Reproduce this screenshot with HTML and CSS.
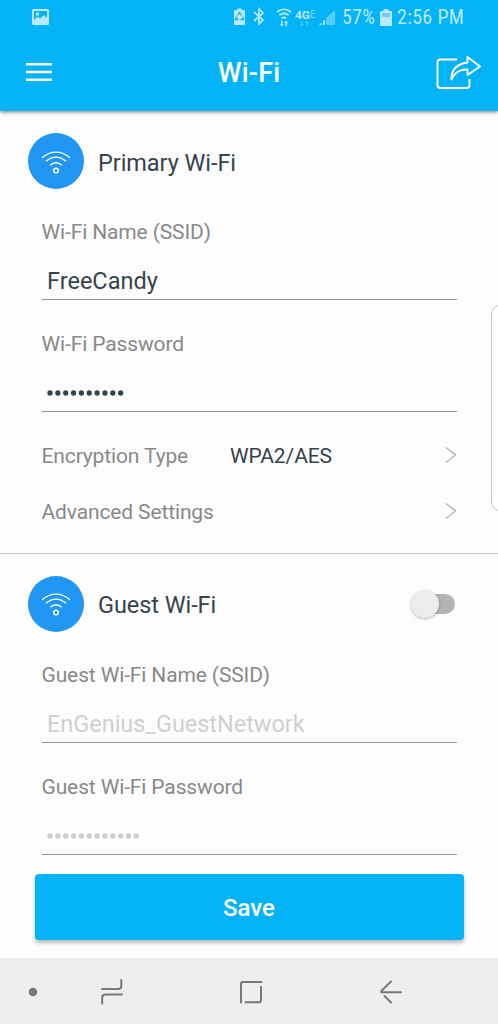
FILE: index.html
```html
<!DOCTYPE html>
<html lang="en">
<head>
<meta charset="utf-8">
<title>Wi-Fi</title>
<link rel="stylesheet" href="styles.css">
</head>
<body>
<header class="top">
  <div class="status">
    <svg class="status-photo" width="17" height="16" viewBox="0 0 17 16"><path fill-rule="evenodd" d="M1.500 0h14Q17 0 17 1.500v13Q17 16 15.500 16h-14Q0 16 0 14.500v-13Q0 0 1.500 0zM2 2v9l3.500-3.500L8 9.500 12 6l3 3V2zM4 3.500h3v3H4z"/></svg>
    <svg class="status-icons" width="102" height="20" viewBox="0 0 102 20">
      <path d="M3.500 1.500h4V3H10q1 0 1 1v13q0 1-1 1H1q-1 0-1-1V4q0-1 1-1h2.500z"/>
      <path class="recycle" d="M3.500 8.500l2-3 2 3M8.500 9.500l1 3H6.500M4.500 12.500h-3l1.200-3"/>
      <path class="line" d="M20 5l9 8-4 4V2l4 4-9 8"/>
      <path class="line" d="M43 5q7-5.500 14 0M45.300 8.300q4.700-3.800 9.400 0M47.600 11.300q2.400-2 4.800 0"/>
      <path d="M47 13.500h1.500V17H50l-2.200 2.500L45.500 17H47zM51.500 19.500V16H50l2.200-2.500 2.300 2.500H53v3.500z"/>
      <text class="network" x="61" y="11.500" textLength="15" lengthAdjust="spacingAndGlyphs">4G</text>
      <text class="lte" x="76" y="11" textLength="5.500" lengthAdjust="spacingAndGlyphs">E</text>
      <path class="faint" d="M67.500 14h1v3H70l-2 2-2-2h1.500zM72.500 19v-3H71l2-2 2 2h-1.500v3zM101 3v15H92v-7z"/>
      <path d="M91 12.500V18h-2v-3.800zM87.500 15.500V18h-2.500z"/>
    </svg>
    <span class="percent">57%</span>
    <svg class="battery" width="12" height="17" viewBox="0 0 12 17"><path d="M3.500 0h5v2H11q1 0 1 1v13q0 1-1 1H1q-1 0-1-1V3q0-1 1-1h2.500z"/><path class="empty" d="M2 4h8v4H2z"/></svg>
    <span class="clock">2:56 PM</span>
  </div>
  <div class="appbar">
    <svg class="menu" width="26" height="18" viewBox="0 0 26 18"><path d="M0 1.300h26M0 9h26M0 16.700h26"/></svg>
    <h1 class="title">Wi-Fi</h1>
    <svg class="share" width="46" height="34" viewBox="0 0 46 34"><path d="M22 3.500H5.500Q2.500 3.500 2.500 6.500V29Q2.500 32 5.500 32H31.500Q34.500 32 34.500 29V23"/><path d="M16.500 23.500Q16 9 32.500 6.500V1L45 10.500 32.500 19V13.500Q21 13 16.500 23.500z"/></svg>
  </div>
</header>
<main class="content">
  <section class="group">
    <div class="heading">
      <span class="badge"><svg width="30" height="26" viewBox="0 0 30 26"><path d="M1 6.700Q15-4.500 29 6.700M5 10.300Q15 2 25 10.300M9.300 14.300Q15 9 20.700 14.300"/><circle cx="15" cy="19.500" r="2.300"/></svg></span>
      <h2 class="primary-title">Primary Wi-Fi</h2>
    </div>
    <div class="field"><label class="label">Wi-Fi Name (SSID)</label><div class="value"><span class="ssid">FreeCandy</span></div></div>
    <div class="field"><label class="label">Wi-Fi Password</label><div class="value"><svg class="dots" width="92" height="8"><path d="M3 4h73"/></svg></div></div>
    <div class="row"><span class="label encryption">Encryption Type</span><span class="setting">WPA2/AES</span><svg class="chevron" width="12" height="18" viewBox="0 0 12 18"><path d="M1 1.500l9.500 7.500L1 16.500"/></svg></div>
    <div class="row"><span class="label">Advanced Settings</span><svg class="chevron" width="12" height="18" viewBox="0 0 12 18"><path d="M1 1.500l9.500 7.500L1 16.500"/></svg></div>
  </section>
  <section class="group guest">
    <div class="heading">
      <span class="badge"><svg width="30" height="26" viewBox="0 0 30 26"><path d="M1 6.700Q15-4.500 29 6.700M5 10.300Q15 2 25 10.300M9.300 14.300Q15 9 20.700 14.300"/><circle cx="15" cy="19.500" r="2.300"/></svg></span>
      <h2 class="guest-title">Guest Wi-Fi</h2>
      <span class="toggle"><span class="knob"></span></span>
    </div>
    <div class="field"><label class="label">Guest Wi-Fi Name (SSID)</label><div class="value"><span class="guest-ssid">EnGenius_GuestNetwork</span></div></div>
    <div class="field"><label class="label">Guest Wi-Fi Password</label><div class="value"><svg class="dots muted" width="96" height="8"><path d="M3 4h88"/></svg></div></div>
  </section>
  <button class="save">Save</button>
  <div class="edge-panel"></div>
</main>
<nav class="navbar">
  <svg class="nav-dot" width="10" height="10"><circle cx="5" cy="5" r="4.300"/></svg>
  <svg class="recents" width="22" height="26" viewBox="0 0 22 26"><path d="M20.300 1v6Q20.300 10 17.300 10H1M21 15.500H4.500Q1.200 15.500 1.200 18.500V24.500"/></svg>
  <svg class="home" width="24" height="24" viewBox="0 0 24 24"><path d="M2 22.500V4Q2 2 4 2H22.500M22 7V20Q22 22.200 20 22.200H6.500"/></svg>
  <svg class="back" width="22" height="24" viewBox="0 0 22 24"><path d="M11 1.500L1.700 10.500Q.700 12.300 2 12.300H21M4.500 16L11 22.500"/></svg>
</nav>
</body>
</html>
```
FILE: styles.css
```css
* { box-sizing: border-box; }
body { margin: 0; width: 498px; height: 1024px; overflow: hidden; display: flex; flex-direction: column; background: #fdfdfd; color: #37434b; font-family: Roboto, sans-serif; }
svg { display: block; flex: none; }
h1, h2 { margin: 0; }
.top { position: relative; z-index: 1; height: 111px; background: #03b3f8; box-shadow: 0 1px 4px #0008; }
.status { height: 34px; display: flex; align-items: center; padding-left: 32px; fill: #b9eaff; color: #b9eaff; font-size: 20px; font-stretch: 75%; white-space: nowrap; }
.status-icons { margin: 0 0 0 185px; }
.recycle { fill: none; stroke: #16a9de; stroke-width: 1.3; }
.line { fill: none; stroke: #b9eaff; stroke-width: 1.7; }
.network { font: bold 11px Roboto, sans-serif; }
.lte { font: 10px Roboto, sans-serif; opacity: .65; }
.faint { opacity: .45; }
.percent { width: 34px; margin-left: 6px; letter-spacing: .2px; }
.battery { margin-left: 4px; }
.empty { fill: #70cdf4; }
.clock { margin-left: 5px; letter-spacing: .3px; }
.appbar { height: 77px; display: grid; grid-template-columns: 100px 1fr 100px; align-items: center; padding: 0 17px 2px 26px; }
.menu { fill: none; stroke: #fff; stroke-width: 2.6; }
.title { color: #fff; font-size: 27px; line-height: 30px; font-weight: 500; text-align: center; padding: 2px 9px 0 0; letter-spacing: .2px; }
.share { justify-self: end; margin-top: 2px; fill: none; stroke: #fff; stroke-width: 1.9; stroke-linejoin: round; }
.content { position: relative; height: 847px; }
.group { height: 442.500px; padding: 22px 41.500px 0; border-bottom: 1px solid #c6c6c6; }
.heading { height: 56px; margin-left: -13.500px; display: flex; align-items: center; gap: 14px; }
.heading h2 { font-size: 23.500px; font-weight: 400; line-height: 30px; padding-top: 3px; letter-spacing: -.06px; }
.badge { width: 56px; height: 56px; border-radius: 50%; background: #2196f3; display: grid; place-items: center; flex: none; }
.badge svg { fill: none; stroke: #fff; stroke-width: 1.4; margin-top: 5px; }
.field { height: 112px; padding-top: 28px; }
.label { display: block; color: #898989; font-size: 21px; line-height: 30px; letter-spacing: -.13px; }
.value { height: 53px; border-bottom: 1px solid #949494; padding: 18px 5.500px 0; font-size: 23.500px; line-height: 32px; }
.dots { margin-top: 12px; fill: none; stroke: #37434b; stroke-width: 5.300; stroke-linecap: round; stroke-dasharray: 0 7.850; }
.guest-ssid { color: #cfd0d0; letter-spacing: -.03px; }
.muted { stroke: #cfcfcf; }
.row { height: 56px; display: flex; align-items: center; }
.field + .row { margin-top: 15px; }
.encryption { width: 188.500px; }
.setting { font-size: 21px; letter-spacing: -.1px; }
.chevron { margin-left: auto; margin-top: -2px; fill: none; stroke: #b4b4b4; stroke-width: 1.3; }
.guest { height: auto; border: 0; }
.toggle { position: relative; width: 36px; height: 20px; margin: 1px 2px 0 auto; border-radius: 10px; background: #b3b3b3; }
.knob { position: absolute; left: -8px; top: -4px; width: 28px; height: 28px; border-radius: 50%; background: #ececec; box-shadow: 0 1px 3px #0004; }
.save { display: block; width: 429px; height: 66px; margin: 18.500px 0 0 34.500px; padding: 2px 0 0; border: 0; border-radius: 4px; background: #03b3f8; color: #fff; font: 500 24px Roboto, sans-serif; box-shadow: 0 3px 4px #0004; }
.edge-panel { position: absolute; right: -12px; top: 194px; width: 19px; height: 206px; border: 1.500px solid #c4c4c4; border-radius: 9px; background: #fff; }
.navbar { height: 66px; background: #eee; display: flex; align-items: center; padding: 2px 0 0 28px; fill: none; stroke: #777; stroke-width: 2; stroke-linecap: round; }
.nav-dot { fill: #777; stroke: none; }
.recents { margin-left: 63px; }
.home { margin-left: 116px; }
.back { margin-left: 117px; }
```
